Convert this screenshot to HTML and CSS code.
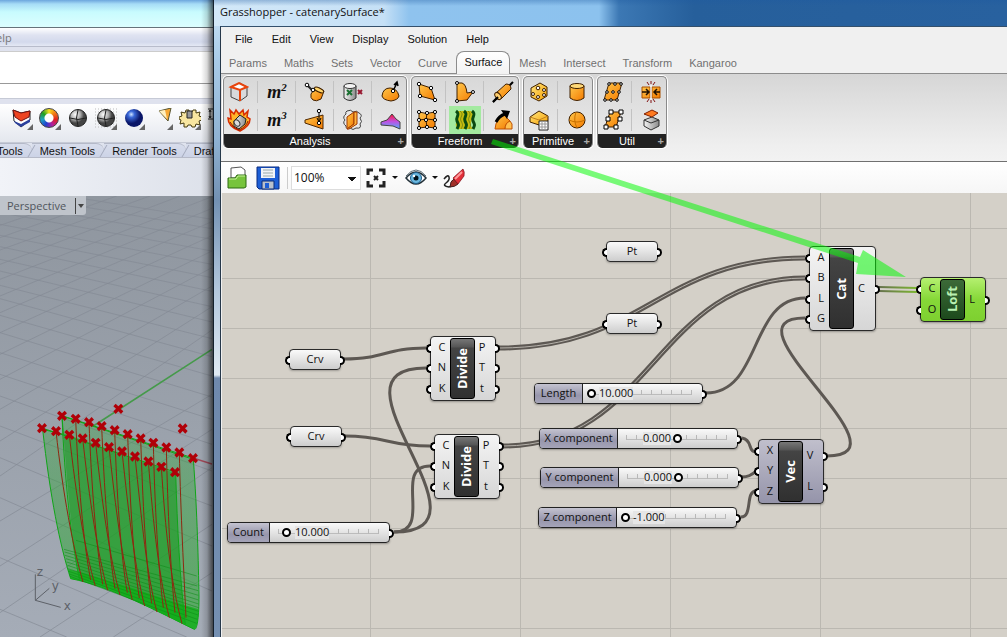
FILE: index.html
```html
<!DOCTYPE html>
<html lang="en">
<head>
<meta charset="utf-8">
<title>Grasshopper - catenarySurface*</title>
<link rel="stylesheet" href="styles.css">
</head>
<body>
<div class="desktop">
  <section class="rhino" aria-label="Rhino">
    <div class="rhino-title"></div>
    <nav class="rhino-menu"><a href="#">Help</a></nav>
    <div class="command-history"></div>
    <div class="command-line"></div>
    <div class="rhino-tools">
      <button class="tool" aria-label="Shade"><svg viewBox="0 0 22 22"><path d="M2 2l8 3 9-2v9l-9 7-7-6z" fill="#fff" stroke="#222"/><path d="M2 2l8 3 9-2-1 6-8 4-6-4z" fill="#ee4422" stroke="#711"/><path d="M3 13l7 3 9-5v3l-9 5-6-4z" fill="#2a3f9d"/><path d="M22 16v6h-6z" fill="#666"/></svg></button>
      <button class="tool" aria-label="Colour wheel"><span class="wheel"></span><svg viewBox="0 0 22 22"><path d="M22 16v6h-6z" fill="#666"/></svg></button>
      <button class="tool" aria-label="Sphere"><svg viewBox="0 0 22 22"><defs><radialGradient id="grey" cx=".35" cy=".3"><stop offset="0" stop-color="#fff"/><stop offset=".6" stop-color="#aaa"/><stop offset="1" stop-color="#444"/></radialGradient></defs><circle cx="11" cy="10" r="8.500" fill="url(#grey)" stroke="#222"/><path d="M3 10q8 3 16 0M11 2q-3 8 0 16" fill="none" stroke="#222"/></svg></button>
      <button class="tool" aria-label="Ghosted sphere"><svg viewBox="0 0 22 22"><path d="M0 1h22M0 4h22M0 7h22M0 10h22M0 13h22M0 16h22M0 19h22" stroke="#bbb" stroke-dasharray="1 2"/><circle cx="11" cy="10" r="8.500" fill="url(#grey)" stroke="#222"/><path d="M3 10q8 3 16 0M11 2q-3 8 0 16" fill="none" stroke="#222"/><path d="M22 16v6h-6z" fill="#666"/></svg></button>
      <button class="tool" aria-label="Render"><svg viewBox="0 0 22 22"><defs><radialGradient id="blue" cx=".35" cy=".3"><stop offset="0" stop-color="#cfe4ff"/><stop offset=".35" stop-color="#3a68d8"/><stop offset="1" stop-color="#0a1668"/></radialGradient></defs><circle cx="11" cy="10" r="9" fill="url(#blue)"/><path d="M22 16v6h-6z" fill="#666"/></svg></button>
      <button class="tool" aria-label="Spotlight"><svg viewBox="0 0 22 22"><path d="M8 3l12-3-3 13z" fill="#f7a834" stroke="#553"/><path d="M8 3l6-1 2 9z" fill="#fff0c0"/><path d="M22 16v6h-6z" fill="#666"/></svg></button>
      <button class="tool" aria-label="Options"><svg viewBox="0 0 22 22"><path d="M0 9l3-1-1-4 4 1 1-3h3v2h3l1-2h3l0 3 4-1-1 4 3 1v3l-3 1 1 4-4-1-1 3h-3l-1-2H9l-1 2H5l0-4-4 1 1-4-2-1z" fill="#f8e6a0" stroke="#443a10"/><path d="M8 3h5v7H8z" fill="#999" stroke="#222"/><path d="M22 16v6h-6z" fill="#666"/></svg></button>
      <button class="tool" aria-label="Dimension"><svg viewBox="0 0 22 22"><path d="M1 1h6M1 11h6M3 2v8M2 4l1-2 1 2M2 8l1 2 1-2M8 1v12" fill="none" stroke="#222"/></svg></button>
    </div>
    <nav class="rhino-tabs">
      <a href="#" class="first">Tools</a><a href="#">Mesh Tools</a><a href="#">Render Tools</a><a href="#">Drafting</a>
    </nav>
    <div class="rhino-panel"></div>
    <div class="viewport">
      <svg class="scene" viewBox="0 0 636 1323" preserveAspectRatio="xMinYMin meet">
        <defs>
          <path id="pt" d="M-15-7l7-8 8 8 8-8 7 8-8 7 8 8-7 8-8-8-8 8-7-8 8-8z" fill="#b00008"/>
          <linearGradient id="cloth" x1="0" y1="0" x2="0" y2="1"><stop offset="0" stop-color="#20a028" stop-opacity=".3"/><stop offset="1" stop-color="#18a81c" stop-opacity=".55"/></linearGradient>
        </defs>
        <g class="ground">
          <path d="M200 0L636 70M60 0L636 98M0 18L636 130M0 50L636 165M0 85L636 205M0 118L636 245M0 152L636 286M0 190L636 332M0 225L636 378M0 268L636 428M0 308L636 482M0 358L636 540M0 410L636 603M0 470L636 670M0 535L636 745M0 600L636 825M0 690L636 930M0 785L636 1050M0 905L636 1185M0 1085L560 1323M0 1240L200 1323"/>
          <path d="M0 55L160 0M0 88L255 0M0 125L350 0M0 162L450 0M0 205L540 0M0 250L636 2M0 300L636 37M0 350L636 77M0 410L636 119M0 475L636 165M0 550L636 215M0 640L636 270M0 735L636 332M0 840L636 402M0 975L636 595M0 1110L636 700M0 1250L636 815M120 1323L636 985M340 1323L636 1130"/>
        </g>
        <path d="M280 690L636 460" stroke="#459a4a" stroke-width="5"/>
        <path d="M579 786L636 804" stroke="#a04858" stroke-width="4"/>
        <path d="M128 700C150 900 180 1050 212 1148C330 1170 480 1250 583 1300C592 1302 597 1260 597 1200C595 1100 592 950 580 790L186 660L190 715Z" fill="url(#cloth)" stroke="#10a518" stroke-width="3"/>
        <path d="M190 712L527 832C532 1000 540 1150 556 1285C450 1235 330 1170 238 1150C215 1030 202 870 190 712Z" fill="#109a18" fill-opacity=".55"/>
        <path d="M204 1120C330 1150 470 1205 596 1240Q595 1290 583 1300C480 1250 330 1170 212 1148Z" fill="#08b010" fill-opacity=".7"/>
        <g class="folds"><path d="M228 1033L590 1140M192 1060L592 1170M194 1068L594 1184M195 1078L595 1198M198 1088L596 1212M200 1098L596 1224M202 1108L596 1235M204 1118L596 1246M206 1126L594 1257M208 1134L592 1270M210 1141L590 1282"/></g>
        <path d="M186 660C194 850 212 1020 238 1150M527 828C532 1000 540 1150 556 1285M126 696L525 828M186 659L579 786" fill="none" stroke="#10a518" stroke-width="3"/>
        <g class="curves">
          <path d="M168 705C188 890 220 1060 249 1158M208 716C228 900 256 1070 286 1170M248 727C268 910 294 1080 323 1183M287 740C307 930 330 1090 360 1197M327 753C347 940 368 1100 397 1212M366 766C386 950 405 1120 434 1230M405 781C425 970 440 1140 471 1248M445 796C460 990 478 1150 508 1265M484 812C496 1000 512 1160 546 1283"/>
          <path d="M227 668C234 850 250 1040 272 1152M267 678C274 860 288 1050 308 1165M305 690C312 870 325 1060 345 1178M344 702C350 890 362 1080 382 1190M383 714C389 900 400 1090 418 1206M422 727C428 910 437 1100 455 1222M460 740C464 930 475 1120 490 1235M499 754C503 940 512 1130 525 1250M538 769C542 950 552 1140 558 1265"/>
        </g>
        <g>
          <use href="#pt" x="186" y="659"/><use href="#pt" x="227" y="668"/><use href="#pt" x="267" y="678"/><use href="#pt" x="305" y="690"/><use href="#pt" x="344" y="702"/><use href="#pt" x="383" y="714"/><use href="#pt" x="422" y="727"/><use href="#pt" x="460" y="740"/><use href="#pt" x="499" y="754"/><use href="#pt" x="538" y="769"/><use href="#pt" x="579" y="786"/>
          <use href="#pt" x="126" y="696"/><use href="#pt" x="168" y="705"/><use href="#pt" x="208" y="716"/><use href="#pt" x="248" y="727"/><use href="#pt" x="287" y="740"/><use href="#pt" x="327" y="753"/><use href="#pt" x="366" y="766"/><use href="#pt" x="405" y="781"/><use href="#pt" x="445" y="796"/><use href="#pt" x="484" y="812"/><use href="#pt" x="525" y="828"/>
          <use href="#pt" x="355" y="638"/><use href="#pt" x="548" y="697"/>
        </g>
        <path d="M106 1135V1213L182 1234M106 1213L148 1177" fill="none" stroke="#5d6168" stroke-width="3"/>
        <g class="axes"><text x="110" y="1140">z</text><text x="155" y="1182">y</text><text x="191" y="1242">x</text></g>
      </svg>
      <button class="view-name"><span>Perspective</span><i></i></button>
    </div>
  </section>

  <main class="gh">
    <h1 class="gh-title">Grasshopper - catenarySurface*</h1>
    <div class="gh-body">
      <nav class="menu"><a href="#">File</a><a href="#">Edit</a><a href="#">View</a><a href="#">Display</a><a href="#">Solution</a><a href="#">Help</a></nav>
      <nav class="tabs"><a href="#">Params</a><a href="#">Maths</a><a href="#">Sets</a><a href="#">Vector</a><a href="#">Curve</a><a href="#" class="active">Surface</a><a href="#">Mesh</a><a href="#">Intersect</a><a href="#">Transform</a><a href="#">Kangaroo</a></nav>
      <div class="ribbon">
        <svg class="defs" width="0" height="0"><defs>
          <linearGradient id="or" x1="0" y1="0" x2="1" y2="1"><stop offset="0" stop-color="#ffc64a"/><stop offset="1" stop-color="#f37a00"/></linearGradient>
          <linearGradient id="ye" x1="0" y1="0" x2="1" y2="1"><stop offset="0" stop-color="#ffe680"/><stop offset="1" stop-color="#f7a000"/></linearGradient>
          <linearGradient id="gr" x1="0" y1="0" x2="1" y2="0"><stop offset="0" stop-color="#f4f4f4"/><stop offset="1" stop-color="#8a8a8a"/></linearGradient>
          <linearGradient id="heat" x1="0" y1="0" x2="0" y2="1"><stop offset="0" stop-color="#ff1030"/><stop offset=".5" stop-color="#c050e0"/><stop offset="1" stop-color="#50b0ff"/></linearGradient>
        </defs></svg>
        <section class="group wide">
          <div class="icons">
            <button aria-label="Box"><svg viewBox="0 0 22 22"><path d="M3 6l9-4 7 4v9l-7 5-9-4z" fill="#d8dadc" stroke="#444"/><path d="M3 6l9 3 7-3-7-4z" fill="#fff"/><path d="M3 6l8-4 8 4-7 3zM12 9v11M3 6l9 3 7-3" fill="none" stroke="#e8440c" stroke-width="2"/></svg></button>
            <button aria-label="Area" class="metric">m<sup>2</sup></button>
            <button aria-label="Closest point"><svg viewBox="0 0 22 22"><path d="M7 13l4-6q5-1 9 3l-3 8q-5 3-8 1-3-2-2-6z" fill="url(#or)" stroke="#402000"/><ellipse cx="15" cy="9" rx="5" ry="2" transform="rotate(25 15 9)" fill="#ffd56a" stroke="#402000"/><path d="M3 4l6 6" stroke="#222" stroke-width="2"/><circle cx="3" cy="4" r="1.800" fill="#fff" stroke="#000"/><circle cx="9" cy="9" r="1.800" fill="#fff" stroke="#000"/></svg></button>
            <button aria-label="Point in brep"><svg viewBox="0 0 22 22"><path d="M2 5v12q6 5 12 0V5z" fill="url(#gr)" stroke="#333"/><ellipse cx="8" cy="5" rx="6" ry="2.500" fill="#f4f4f4" stroke="#333"/><path d="M5 9l5 5M10 9l-5 5" stroke="#187030" stroke-width="2"/><path d="M16 9l4 4M20 9l-4 4" stroke="#981830" stroke-width="2"/></svg></button>
            <button aria-label="Evaluate surface"><svg viewBox="0 0 22 22"><path d="M2 15q1-8 8-8t9 8q-1 4-8 5-8-1-9-5z" fill="url(#or)" stroke="#402000"/><path d="M13 10l4-8M14 4l3-3 1 4" fill="none" stroke="#000" stroke-width="1.500"/><circle cx="13" cy="10" r="1.700" fill="#fff" stroke="#000"/></svg></button>
            <button aria-label="Burn"><svg viewBox="0 0 22 22"><path d="M2 1l4 4 2-4 3 4 4-4 1 5 4-4-1 6 3 2q0 7-10 12Q0 18 0 9l3 1z" fill="#ffb42a" stroke="#d72b00" stroke-width="1.500"/><path d="M6 12l6-6 6 4-1 5-6 5-5-3z" fill="url(#gr)" stroke="#222"/><ellipse cx="9" cy="14" rx="2.500" ry="3.500" transform="rotate(-35 9 14)" fill="#ddd" stroke="#333"/><path d="M2 13q3 6 9 8 7-3 9-9" fill="none" stroke="#8e1600"/></svg></button>
            <button aria-label="Volume" class="metric">m<sup>3</sup></button>
            <button aria-label="Deviation"><svg viewBox="0 0 22 22"><path d="M1 11l18-5v14l-18-6z" fill="url(#or)" stroke="#502800"/><path d="M15 2v12M13 9l2 4 2-4" fill="none" stroke="#000"/><circle cx="15" cy="2" r="1.700" fill="#fff" stroke="#000"/><circle cx="15" cy="14" r="1.700" fill="#fff" stroke="#000"/></svg></button>
            <button aria-label="Inclusion"><svg viewBox="0 0 22 22"><path d="M5 2q4-2 6 1 4-2 6 1 4 2 1 5 3 4 0 6 2 5-4 4-3 3-6 0-4 2-4-2-4-3-1-6-3-3 1-6-1-2 1-3z" fill="#e8e8e8" stroke="#444"/><path d="M5 8l7-5v12l-7 5z" fill="url(#or)" stroke="#a03800"/><path d="M12 3h3v12l-8 5H5l7-5z" fill="#ffb43c" stroke="#a03800"/></svg></button>
            <button aria-label="Curvature"><svg viewBox="0 0 22 22"><path d="M1 13l6-2 5-6 4 5 4 3v7l-7-3-12-1z" fill="url(#heat)" stroke="#444"/></svg></button>
          </div>
          <h2>Analysis<i>+</i></h2>
        </section>
        <section class="group medium">
          <div class="icons">
            <button aria-label="Four point surface"><svg viewBox="0 0 22 22"><path d="M3 3l12 4 4 12-15-4z" fill="url(#or)" stroke="#402000"/><g fill="#fff" stroke="#000"><circle cx="3" cy="3" r="1.700"/><circle cx="15" cy="7" r="1.700"/><circle cx="19" cy="19" r="1.700"/><circle cx="4" cy="15" r="1.700"/></g></svg></button>
            <button aria-label="Edge surface"><svg viewBox="0 0 22 22"><path d="M3 2h5q4 1 5 10l6-1-6 8-10 1z" fill="url(#or)" stroke="#402000"/><circle cx="3" cy="2" r="1.500" fill="#fff" stroke="#000"/><circle cx="3" cy="20" r="1.500" fill="#fff" stroke="#000"/><circle cx="19" cy="11" r="1.500" fill="#fff" stroke="#000"/></svg></button>
            <button aria-label="Pipe"><svg viewBox="0 0 22 22"><path d="M1 21L21 1" stroke="#000" stroke-width="2"/><path d="M4 12L14 3q5 0 5 5L9 18z" fill="url(#or)" stroke="#402000"/><ellipse cx="6" cy="15" rx="2.500" ry="4" transform="rotate(-40 6 15)" fill="#ffd070" stroke="#402000"/><path d="M1 21l5-5" stroke="#000" stroke-width="2"/></svg></button>
            <button aria-label="Network surface"><svg viewBox="0 0 22 22"><path d="M3 3q7 3 16 0v16q-8-2-16 0z" fill="url(#or)" stroke="#402000"/><path d="M3 11q8-2 16 0M11 4q-2 8 0 14" fill="none" stroke="#402000"/><g fill="#fff" stroke="#000"><circle cx="3" cy="3" r="1.600"/><circle cx="11" cy="4" r="1.600"/><circle cx="19" cy="3" r="1.600"/><circle cx="3" cy="11" r="1.600"/><circle cx="10" cy="11" r="1.600"/><circle cx="19" cy="11" r="1.600"/><circle cx="3" cy="19" r="1.600"/><circle cx="11" cy="18" r="1.600"/><circle cx="19" cy="19" r="1.600"/></g></svg></button>
            <button aria-label="Loft" class="picked"><svg viewBox="0 0 22 22"><path d="M3 2q3 4 0 9t1 9h15q-4-4-1-9t-1-9z" fill="#c5bc10"/><path d="M2 2c5 4-1 6 1 10s2 4 0 8M10 2c5 4-1 6 1 10s2 4 0 8M18 2c5 4-1 6 1 10s2 4 0 8" fill="none" stroke="#0a4a10" stroke-width="3"/><path d="M6 2c5 4-1 6 1 10s2 4 0 8M14 2c5 4-1 6 1 10s2 4 0 8" fill="none" stroke="#7c8a10"/></svg></button>
            <button aria-label="Sweep"><svg viewBox="0 0 22 22"><path d="M3 20Q4 9 12 6l6 6q-5 3-5 8z" fill="url(#or)" stroke="#c05000"/><path d="M13 20q0-6 5-8l2 3v5z" fill="#ffc050" stroke="#c05000"/><path d="M4 13Q7 7 13 5" fill="none" stroke="#000" stroke-width="3"/><path d="M9 1l9 1-3 8z" fill="#000"/></svg></button>
          </div>
          <h2>Freeform<i>+</i></h2>
        </section>
        <section class="group">
          <div class="icons">
            <button aria-label="Bounding box"><svg viewBox="0 0 22 22"><path d="M3 7l9-5 7 4v9l-8 5-8-4z" fill="url(#ye)" stroke="#402000"/><g fill="#fff" stroke="#402000"><circle cx="10" cy="7" r="1.800"/><circle cx="16" cy="9" r="1.500"/><circle cx="5" cy="13" r="1.500"/><circle cx="10" cy="16" r="1.500"/><circle cx="16" cy="14" r="1.500"/></g></svg></button>
            <button aria-label="Cylinder"><svg viewBox="0 0 22 22"><path d="M4 5v12q7 5 14 0V5z" fill="url(#or)" stroke="#402000"/><ellipse cx="11" cy="5" rx="7" ry="2.500" fill="#ffd978" stroke="#402000"/></svg></button>
            <button aria-label="Plane surface"><svg viewBox="0 0 22 22"><path d="M2 8l9-6 9 5v5l-9 4-9-3z" fill="url(#ye)" stroke="#402000"/><path d="M2 8l9 3 9-4" fill="none" stroke="#c08020"/><path d="M11 12h9v9h-9z" fill="#fff" stroke="#222"/><path d="M14 12v9M17 12v9M11 15h9M11 18h9" stroke="#999"/></svg></button>
            <button aria-label="Sphere"><svg viewBox="0 0 22 22"><circle cx="11" cy="11" r="8" fill="url(#or)" stroke="#402000"/><path d="M3 11q8 4 16 0M10 3q-3 8 1 16" fill="none" stroke="#c87000"/></svg></button>
          </div>
          <h2>Primitive<i>+</i></h2>
        </section>
        <section class="group">
          <div class="icons">
            <button aria-label="Divide surface"><svg viewBox="0 0 22 22"><path d="M7 2h13l-5 17H2z" fill="url(#or)" stroke="#402000"/><g fill="#fff" stroke="#000"><circle cx="7" cy="3" r="1.300"/><circle cx="13" cy="3" r="1.300"/><circle cx="19" cy="3" r="1.300"/><circle cx="5" cy="11" r="1.300"/><circle cx="11" cy="11" r="1.300"/><circle cx="17" cy="11" r="1.300"/><circle cx="3" cy="19" r="1.300"/><circle cx="9" cy="19" r="1.300"/><circle cx="15" cy="19" r="1.300"/></g></svg></button>
            <button aria-label="Flip"><svg viewBox="0 0 22 22"><path d="M2 6h8v11H2zM12 6h8v11h-8z" fill="url(#or)" stroke="#a85000"/><path d="M11 4v15" stroke="#fff"/><path d="M2 11h7M6 8l3 3-3 3M20 11h-6M17 8l-3 3 3 3" fill="none" stroke="#201000" stroke-width="1.500"/><path d="M11 0v3M7 1l2 3M15 1l-2 3M11 19v3M7 21l2-3M15 21l-2-3" stroke="#801010"/></svg></button>
            <button aria-label="Isotrim"><svg viewBox="0 0 22 22"><path d="M8 3h11l-5 15H3z" fill="url(#or)" stroke="#402000"/><path d="M7 1h4v4H7zM17 1h4v4h-4zM4 8h4v4H4zM16 8h4v4h-4zM2 16h4v4H2zM12 16h4v4h-4z" fill="#fff" stroke="#000"/></svg></button>
            <button aria-label="Offset"><svg viewBox="0 0 22 22"><path d="M4 11l8-3 7 3v6l-8 4-7-4z" fill="url(#gr)" stroke="#333"/><path d="M4 11l7 3 8-3" fill="none" stroke="#333"/><path d="M4 5l8-4 6 3-6 4z" fill="#ff7a20" stroke="#802000"/></svg></button>
          </div>
          <h2>Util<i>+</i></h2>
        </section>
      </div>
      <div class="canvas-bar">
        <button aria-label="Open"><svg viewBox="0 0 24 24"><path d="M6 2l10-1 4 3v8H6z" fill="#fff" stroke="#555"/><path d="M3 12h7l2-3h9v12l-2 1H3z" fill="#77c43c" stroke="#2d6b10"/><path d="M4 13h7l2-3h7" fill="none" stroke="#c7f09a"/></svg></button>
        <button aria-label="Save" class="save"><svg viewBox="0 0 24 24"><path d="M1 1h22v22H3l-2-2z" fill="#1d5fd6" stroke="#082a80"/><path d="M5 2h14v10H5z" fill="#f2f4f8"/><path d="M7 4h10M7 7h10M7 10h10" stroke="#9aa"/><path d="M6 15h12v8H6z" fill="#b8c0cc" stroke="#0b2c78"/><path d="M9 17h4v5H9z" fill="#1d5fd6"/></svg></button>
        <span class="rule"></span>
        <select aria-label="Zoom"><option>100%</option><option>200%</option></select>
        <button aria-label="Zoom extents" class="split"><svg viewBox="0 0 24 24"><path d="M4 9V4h5M15 4h5v5M20 15v5h-5M9 20H4v-5" fill="none" stroke="#222" stroke-width="3"/><path d="M10 10l4 4M14 10l-4 4" stroke="#222" stroke-width="2"/></svg><i></i></button>
        <button aria-label="Preview" class="split"><svg viewBox="0 0 24 24"><path d="M2 12Q7 6 12 6t10 6q-5 6-10 6T2 12z" fill="#fff" stroke="#223038" stroke-width="1.500"/><circle cx="12" cy="12" r="5.500" fill="#6ab8e0" stroke="#1c5c88"/><circle cx="12" cy="12" r="2.500" fill="#001018"/><circle cx="10" cy="10" r="1.200" fill="#fff"/><path d="M2 10Q7 4 12 4t10 6" fill="none" stroke="#607078"/></svg><i></i></button>
        <button aria-label="Sketch" class="sketch"><svg viewBox="0 0 24 24"><path d="M2 13q4-5 5-2t-3 6 3 4l5-2" fill="none" stroke="#222" stroke-width="1.500"/><path d="M8 21q0-6 4-8l4 5q-3 3-8 3z" fill="#a03028" stroke="#422"/><path d="M11 12L21 3q2 3 1 7l-6 8z" fill="#e2303a" stroke="#7c0a14" stroke-width=".7"/><path d="M13 13l7-7" stroke="#ff9a9a" stroke-width="2"/></svg></button>
      </div>

      <div class="canvas">
        <svg class="wires" viewBox="222 193 785 444" width="785" height="444">
          <defs><linearGradient id="sel" gradientUnits="userSpaceOnUse" x1="878" y1="0" x2="918" y2="0"><stop offset="0" stop-color="#66704f"/><stop offset="1" stop-color="#7db82f"/></linearGradient></defs>
          <g class="wire">
            <path d="M344 359C385 359 385 348 426 348"/>
            <path d="M345 436C387 436 387 446 430 446"/>
            <path d="M394 532C505 532 315 368 426 368"/>
            <path d="M394 532C434 532 392 466 430 466"/>
            <path d="M706 393C762 393 749 298 805 298"/>
            <path d="M827 456C916 456 716 318 805 318"/>
            <path d="M742 438Q748 439 750 446T756 451M742 477Q750 477 756 471M741 517C753 517 745 491 756 491"/>
          </g>
          <g class="wire double">
            <path d="M499 348C645 348 659 258 805 258"/>
            <path d="M503 446C653 446 655 278 805 278"/>
          </g>
          <g class="wire core-line">
            <path d="M499 348C645 348 659 258 805 258"/>
            <path d="M503 446C653 446 655 278 805 278"/>
          </g>
          <path d="M879 287L917 288M879 291L917 292" stroke="url(#sel)" stroke-width="2"/>
        </svg>

        <div class="param crv-1"><i class="port in"></i>Crv<i class="port out"></i></div>
        <div class="param crv-2"><i class="port in"></i>Crv<i class="port out"></i></div>
        <div class="param pt-1"><i class="port in"></i>Pt<i class="port out"></i></div>
        <div class="param pt-2"><i class="port in"></i>Pt<i class="port out"></i></div>

        <div class="node divide-1">
          <ul class="ins"><li>C</li><li>N</li><li>K</li></ul><b><span>Divide</span></b><ul class="outs"><li>P</li><li>T</li><li>t</li></ul>
        </div>
        <div class="node divide-2">
          <ul class="ins"><li>C</li><li>N</li><li>K</li></ul><b><span>Divide</span></b><ul class="outs"><li>P</li><li>T</li><li>t</li></ul>
        </div>
        <div class="node cat">
          <ul class="ins"><li>A</li><li>B</li><li>L</li><li>G</li></ul><b><span>Cat</span></b><ul class="outs"><li>C</li></ul>
        </div>
        <div class="node vec">
          <ul class="ins"><li>X</li><li>Y</li><li>Z</li></ul><b><span>Vec</span></b><ul class="outs"><li>V</li><li>L</li></ul>
        </div>
        <div class="node loft">
          <ul class="ins"><li>C</li><li>O</li></ul><b><span>Loft</span></b><ul class="outs"><li>L</li></ul>
        </div>

        <div class="slider count"><label for="s1">Count</label><div class="track"><input id="s1" type="range" min="0" max="100" value="8"><output class="after">10.000</output></div><i class="port out"></i></div>
        <div class="slider length"><label for="s2">Length</label><div class="track"><input id="s2" type="range" min="0" max="100" value="0"><output class="after low">10.000</output></div><i class="port out"></i></div>
        <div class="slider x-comp"><label for="s3">X component</label><div class="track"><input id="s3" type="range" min="-1" max="1" step="0.001" value="0"><output class="before">0.000</output></div><i class="port out"></i></div>
        <div class="slider y-comp"><label for="s4">Y component</label><div class="track"><input id="s4" type="range" min="-1" max="1" step="0.001" value="0"><output class="before">0.000</output></div><i class="port out"></i></div>
        <div class="slider z-comp"><label for="s5">Z component</label><div class="track"><input id="s5" type="range" min="-1" max="1" step="0.001" value="-1"><output class="after low">-1.000</output></div><i class="port out"></i></div>
      </div>
    </div>
  </main>
  <svg class="callout" viewBox="0 0 1007 637" width="1007" height="637"><path d="M493 139L860 257L863 250L906 277L856 274L858 263L491 144Z"/></svg>
</div>
</body>
</html>
```
FILE: styles.css
```css
*, *::before, *::after { box-sizing: border-box; }
body { margin: 0; font-family: "Liberation Sans", Arial, sans-serif; font-size: 11px; color: #111; }
a { color: inherit; text-decoration: none; }
button { border: 0; padding: 0; background: none; font: inherit; color: inherit; }
ul { list-style: none; margin: 0; padding: 0; }
h1, h2 { margin: 0; font-weight: normal; }

.desktop { position: relative; display: flex; height: 100vh; overflow: hidden; }

/* Rhino */
.rhino { position: relative; flex: 0 0 213px; display: flex; flex-direction: column; overflow: hidden; background: #dfe2ee; }
.rhino::after { content: ""; position: absolute; inset: 0 0 0 auto; width: 12px; background: linear-gradient(90deg, rgba(0,0,0,0), rgba(0,0,0,.15) 50%, rgba(0,0,0,.6)); }
.rhino-title { height: 28px; background: linear-gradient(#6ca6dd, #a6dcf6 4px, #c8fbfe 12px, #dcfefe); border-bottom: 1px solid #66727a; }
.rhino-menu { height: 19px; background: linear-gradient(#fff, #dfe3f1 7px, #d3d9ec 14px, #e4e8f4); border-bottom: 1px solid #b8bccb; font-family: "Open Sans", sans-serif; line-height: 20px; color: #777; }
.rhino-menu a { display: block; margin-left: -12px; }
.command-history { height: 33px; margin-top: 4px; background: #fff; border-bottom: 1px solid #999; border-top: 1px solid #ccc; }
.command-line { height: 15px; background: #fff; border-bottom: 1px solid #c6cad6; }
.rhino-tools { display: flex; gap: 6px; height: 39px; margin-top: 5px; padding: 4px 0 0 11px; background: linear-gradient(#fff, #e4e7ee); border-bottom: 1px solid #c6cad6; }
.tool { position: relative; flex: 0 0 22px; height: 22px; }
.tool svg { display: block; position: relative; width: 22px; height: 22px; }
.wheel { position: absolute; left: 0; top: 0; width: 20px; height: 20px; border: 1px solid #444; border-radius: 50%; background: radial-gradient(circle, #fff 0 4px, transparent 5px), conic-gradient(#f8e020, #f07818, #e02020, #b020a0, #2040d0, #20a0c0, #20a020, #f8e020); }
.rhino-tabs { display: flex; height: 15px; background: #dfe3ee; border-bottom: 1px solid #b6bac8; white-space: nowrap; }
.rhino-tabs a { position: relative; flex: none; padding: 0 9px 0 8px; line-height: 15px; border-top: 1px solid #b4b9c8; background: linear-gradient(#d8ddec, #ccd3e6); border-radius: 0 8px 0 0; }
.rhino-tabs a + a::before { content: ""; position: absolute; left: -1px; top: 1px; height: 12px; border-left: 1px solid #a3a9bb; transform: skewX(-30deg); }
.rhino-tabs .first { margin-left: -11px; }
.rhino-panel { height: 38px; background: linear-gradient(90deg, #f1f3f8, #dde1ea); }
.viewport { position: relative; flex: 1; min-height: 0; background: linear-gradient(#8f969f, #a5acb7); overflow: hidden; }
.scene { display: block; width: 212px; height: 441px; }
.ground path { fill: none; stroke: #848a94; stroke-width: 2; }
.folds path { fill: none; stroke: #0b8a14; stroke-width: 2; opacity: .8; }
.curves path { fill: none; stroke: #8e2810; stroke-width: 3; }
.axes { font: 36px "DejaVu Sans", sans-serif; fill: #5d6168; }
.view-name { position: absolute; left: 0; top: 0; display: flex; align-items: center; height: 19px; background: #bfc4cb; font-family: "Open Sans", sans-serif; color: #50555c; border-radius: 0 0 3px 0; }
.view-name span { padding: 0 9px 0 7px; }
.view-name i { display: flex; align-items: center; height: 16px; padding: 0 2px; border-left: 1px solid #444; }
.view-name i::after { content: ""; border: 3px solid transparent; border-top: 4px solid #444; border-bottom: 0; }

/* Grasshopper window */
.gh { flex: 1; min-width: 0; display: flex; flex-direction: column; padding-left: 6px; border-left: 1px solid #14202c; background: linear-gradient(#cfe6f8, #a9cbe8 60px, #8fb2d2 140px, #7391b3 200px, #b3c7dc 290px, #dfe9f3 375px, #6f89ad 378px, #7590b2); }
.gh-title { margin-left: -6px; padding-left: 6px; height: 26px; font: 11px/24px "Open Sans", sans-serif; background: linear-gradient(rgba(30,90,160,.35), transparent 6px), linear-gradient(90deg, #d3e8f8, #c5e0f6 170px, #8fc3ee 195px, #8cc2ee 385px, #3c78b4 405px, #265f9b 480px, #28619f); }
.gh-body { flex: 1; min-height: 0; display: flex; flex-direction: column; background: #f0f0f0; border-left: 1px solid #26384a; border-top: 1px solid #34506c; }
.menu { display: flex; gap: 19px; height: 24px; padding-left: 14px; line-height: 24px; }
.tabs { display: flex; gap: 1px; height: 23px; line-height: 24px; color: #707070; border-bottom: 1px solid #8c8c8c; }
.tabs a { padding: 0 8px 0 8px; }
.tabs .active { height: 23px; padding: 0 7px; line-height: 21px; color: #111; border: 1px solid #8c8c8c; border-bottom: 0; border-radius: 8px 8px 0 0; background: linear-gradient(#fff, #f2f2f2); }
.ribbon { display: flex; gap: 4px; align-items: flex-start; height: 88px; padding: 2px 2px 0; background: linear-gradient(#d6d6d6, #efefef 72px, #f2f2f2); border-bottom: 1px solid #707070; }
.defs { position: absolute; }
.group { border-radius: 5px; overflow: hidden; background: linear-gradient(#d8d8d8, #ececec); box-shadow: 0 0 0 1px #fff; border: 1px solid #8a8a8a; border-bottom: 0; }
.icons { display: grid; grid-template: 28px 28px / repeat(2, 32px); column-gap: 6px; margin: 1px -1px 0; }
.wide .icons { grid-template-columns: repeat(5, 32px); }
.medium .icons { grid-template-columns: repeat(3, 32px); }
.icons button { position: relative; display: grid; place-items: center; }
.icons button + button::before { content: ""; position: absolute; left: -4px; top: 3px; bottom: 3px; border-left: 1px solid #c2c2c2; }
.wide button:nth-child(6)::before, .medium button:nth-child(4)::before, .group:not(.wide, .medium) button:nth-child(3)::before { display: none; }
.icons svg { width: 22px; height: 22px; overflow: visible; }
.icons .picked { background: #a4eaa0; }
.icons .metric { display: flex; justify-content: center; align-items: center; font: italic bold 18px "Liberation Serif", serif; }
.metric sup { font-size: 11px; align-self: flex-start; line-height: 18px; }
.group h2 { position: relative; height: 14px; margin: 0 -1px; background: #222; color: #fff; font-size: 11px; line-height: 14px; text-align: center; padding-right: 10px; }
.group h2 i { position: absolute; right: 3px; top: 0; font-style: normal; font-weight: bold; color: #aaa; }
.canvas-bar { display: flex; align-items: center; height: 31px; padding: 0 4px; background: linear-gradient(#fff, #f6f6f6); }
.canvas-bar button { display: flex; align-items: center; }
.canvas-bar svg { width: 24px; height: 24px; }
.canvas-bar .save { margin-left: 7px; }
.rule { width: 1px; height: 22px; margin: 0 3px 0 7px; background: #ccc; }
.canvas-bar select { appearance: none; width: 70px; height: 24px; padding: 0 2px; border: 1px solid #ddd; border-radius: 0; color: #111; font: 12px "Open Sans", sans-serif;
  background: conic-gradient(from -45deg at 4px 4px, #111 90deg, transparent 0) right 4px top 10px / 8px 4px no-repeat, #fff; }
.canvas-bar .split { margin-left: 3px; margin-right: 3px; gap: 4px; }
.split i { border: 3px solid transparent; border-top: 3px solid #111; border-bottom: 0; }
.canvas-bar .sketch { margin-left: 1px; }

/* Definition canvas */
.canvas { position: relative; z-index: 0; flex: 1; min-height: 0; margin-left: 1px; overflow: hidden; font-family: "Open Sans", sans-serif;
  background: repeating-linear-gradient(90deg, transparent 0 148px, #bbb8b1 148px 149px, transparent 149px 150px), repeating-linear-gradient(transparent 0 35px, #bbb8b1 35px 36px, transparent 36px 50px), #d4d0c8; }
.wires { position: absolute; left: 0; top: 0; }
.wire path { fill: none; stroke: #5d5853; stroke-width: 3; }
.double path { stroke-width: 5; }
.core-line path { stroke: #b5b1aa; stroke-width: 1; }
.port, .ins li::before, .outs li::after { content: ""; position: absolute; top: 50%; width: 5px; height: 9px; margin-top: -4px; border: 2px solid #000; background: #fff; }
.port.in, .ins li::before { left: -5px; border-right: 0; border-radius: 5px 0 0 5px; }
.port.out, .outs li::after { right: -5px; border-left: 0; border-radius: 0 5px 5px 0; }
.param { position: absolute; width: 52px; height: 21px; border: 1px solid #2a2a2a; border-radius: 4px; text-align: center; line-height: 17px; background: linear-gradient(#fafafa, #e4e4e4 50%, #cdcdcd); box-shadow: 0 1px 2px rgba(0,0,0,.25); }
.crv-1 { left: 67px; top: 156px; }
.crv-2 { left: 68px; top: 233px; }
.pt-1 { left: 384px; top: 48px; }
.pt-2 { left: 384px; top: 120px; }
.node { position: absolute; display: grid; grid-template-columns: 19px 25px 1fr; width: 66px; height: 65px; border: 1px solid #2a2a2a; border-radius: 4px; background: linear-gradient(#f4f4f4, #d6d6d6); box-shadow: 0 1px 2px rgba(0,0,0,.3); }
.node ul { display: flex; flex-direction: column; padding: 1px 0; }
.node li { position: relative; flex: 1; display: grid; place-items: center; padding-bottom: 3px; }
.ins li { padding-left: 3px; }
.outs li { padding-right: 6px; }
.node b { display: grid; place-items: center; margin: 1px 0; border: 1px solid #000; border-radius: 3px; background: linear-gradient(#777, #555 8px, #444 9px, #303030); color: #fff; font-size: 13px; }
.node b span { writing-mode: vertical-rl; transform: rotate(180deg); line-height: 23px; }
.divide-1 { left: 208px; top: 143px; }
.divide-2 { left: 212px; top: 241px; }
.cat { left: 587px; top: 53px; width: 67px; height: 85px; }
.vec { left: 536px; top: 246px; background: linear-gradient(#c0bfcc, #9594aa); }
.loft { left: 698px; top: 84px; height: 45px; background: linear-gradient(#b5f070, #86d838 50%, #7ed030); }
.loft b { background: linear-gradient(#3c6a38, #1d4a1c); color: #b8f0b0; }
.slider { position: absolute; display: flex; height: 21px; border: 1px solid #222; border-radius: 4px; background: linear-gradient(#fafafa, #e4e4e4 50%, #cdcdcd); box-shadow: 0 1px 2px rgba(0,0,0,.3); }
.slider label { width: 78px; line-height: 17px; text-align: center; white-space: nowrap; border-right: 1px solid #222; border-radius: 3px 0 0 3px; background: linear-gradient(#c4c3d0, #9796ac 60%, #a5a4b8); }
.slider .track { position: relative; width: 119px; }
.slider input { appearance: none; position: absolute; left: 4px; top: 5px; width: 110px; height: 9px; margin: 0; background: repeating-linear-gradient(90deg, #b8b8b8 0 1px, transparent 1px 10px) 4px 1px / 101px 5px no-repeat, linear-gradient(#bcbcbc, #bcbcbc) 4px 5px / 101px 1px no-repeat; }
.slider input::-webkit-slider-thumb { appearance: none; width: 9px; height: 9px; border: 2px solid #000; border-radius: 50%; background: #fff; }
.slider output { position: absolute; top: 3px; height: 13px; line-height: 12px; background: #e6e6e6; pointer-events: none; }
.slider .after { left: 25px; }
.slider .after.low { left: 16px; }
.slider .before { right: 66px; }
.count { left: 5px; top: 329px; }
.count label { width: 42px; }
.length { left: 312px; top: 190px; }
.length label { width: 48px; }
.x-comp { left: 317px; top: 235px; }
.y-comp { left: 318px; top: 274px; }
.z-comp { left: 316px; top: 314px; }

.callout { position: absolute; left: 0; top: 0; pointer-events: none; }
.callout path { fill: #00fa00; fill-opacity: .52; }
```
